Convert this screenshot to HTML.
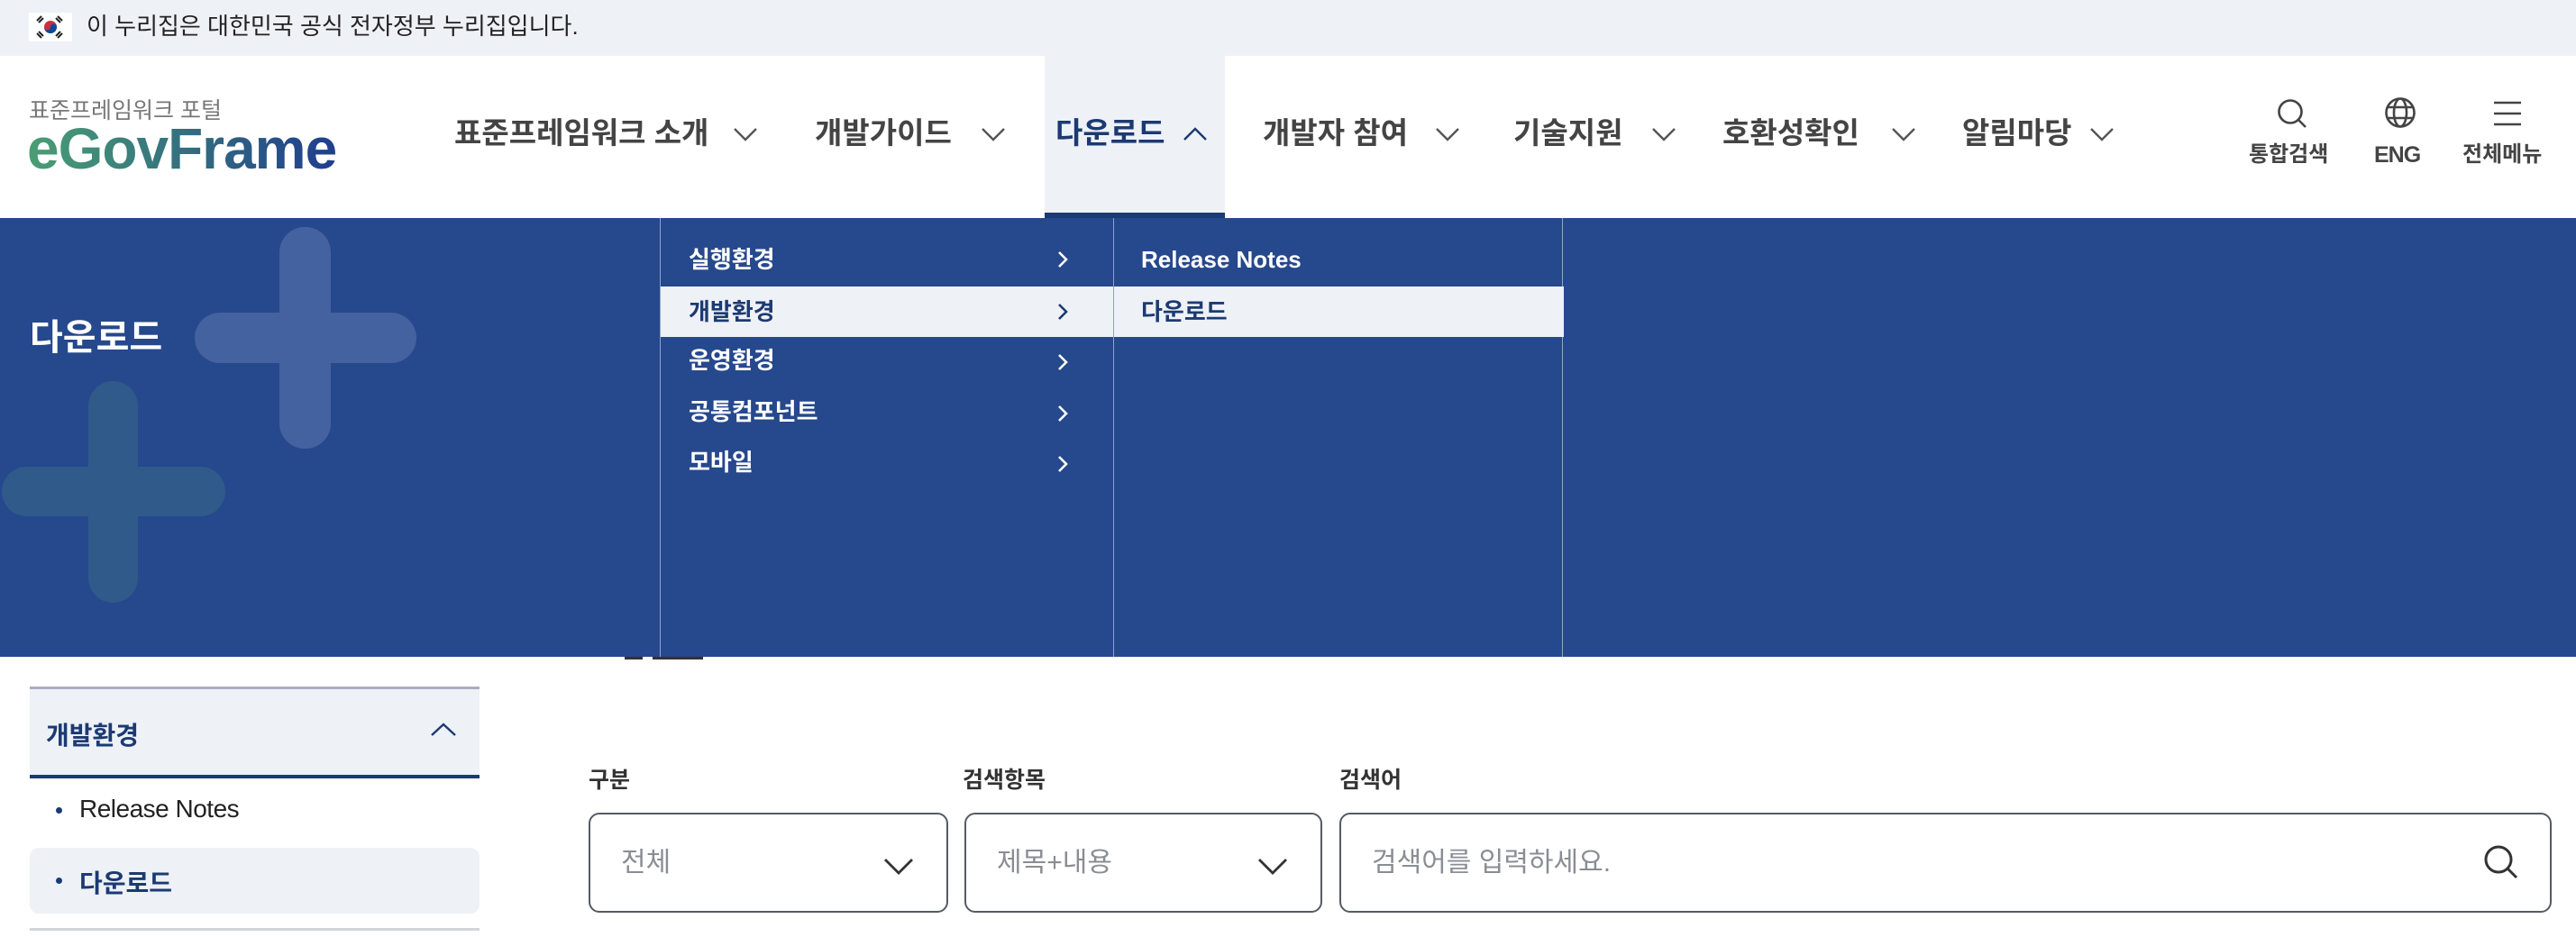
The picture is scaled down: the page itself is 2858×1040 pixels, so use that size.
<!DOCTYPE html>
<html><head><meta charset="utf-8"><style>
*{margin:0;padding:0;box-sizing:border-box}
body{width:2858px;height:1040px;overflow:hidden;background:#fff;font-family:"Liberation Sans","Noto Sans CJK KR",sans-serif;position:relative}
.a{position:absolute;white-space:nowrap}
.nav{font-size:33px;font-weight:bold;color:#444;top:128px;line-height:40px}
.dd{font-size:26px;font-weight:bold;color:#fff;line-height:30px}
.lbl{font-size:25px;font-weight:bold;color:#333;top:846px}
.box{position:absolute;top:902px;height:111px;border:2px solid #555a62;border-radius:12px;background:#fff}
.ph{position:absolute;left:34px;top:34px;font-size:30px;color:#8a8d93;line-height:40px}
.il{top:156px;font-size:24px;font-weight:bold;color:#444;line-height:32px}
</style></head><body>
<div class="a" style="left:0;top:0;width:2858px;height:62px;background:#eef1f6"></div>
<svg class="a" style="left:32px;top:14px" width="48" height="32" viewBox="0 0 48 32"><rect width="48" height="32" fill="#fff"/><circle cx="24" cy="16" r="7" fill="#c8313e"/><path d="M17 16a7 7 0 0 0 14 0a3.5 3.5 0 0 0-7 0a3.5 3.5 0 0 1-7 0z" fill="#0b4a9e"/><g stroke="#222" stroke-width="2"><path d="M9 9l5-5M11 11l5-5M32 4l5 5M30 6l5 5M9 23l5 5M11 21l5 5M32 28l5-5M30 26l5-5"/></g></svg>
<div class="a" style="left:96px;top:12px;font-size:26px;color:#222;line-height:34px">이 누리집은 대한민국 공식 전자정부 누리집입니다.</div>

<div class="a" style="left:32px;top:108px;font-size:25px;color:#777;line-height:30px">표준프레임워크 포털</div>
<div class="a" style="left:30px;top:128px;font-size:64px;font-weight:bold;line-height:74px;letter-spacing:-1px;background:linear-gradient(90deg,#4a9e74,#34707f 50%,#1f3d8e);-webkit-background-clip:text;background-clip:text;color:transparent">eGovFrame</div>

<div class="a" style="left:1159px;top:62px;width:200px;height:180px;background:#eef1f6"></div>
<div class="a" style="left:1159px;top:236px;width:200px;height:6px;background:#1c3a72"></div>

<div class="a nav" style="left:504px">표준프레임워크 소개</div>
<div class="a nav" style="left:904px">개발가이드</div>
<div class="a nav" style="left:1171px;color:#1c3a72">다운로드</div>
<div class="a nav" style="left:1401px">개발자 참여</div>
<div class="a nav" style="left:1679px">기술지원</div>
<div class="a nav" style="left:1911px">호환성확인</div>
<div class="a nav" style="left:2177px">알림마당</div>
<svg class="a" style="left:0;top:0" width="2858" height="242" fill="none" stroke-width="2.4">
<g stroke="#555"><path d="M815 143l12 12l12-12M1090 143l12 12l12-12M1594 143l12 12l12-12M1834 143l12 12l12-12M2100 143l12 12l12-12M2320 143l12 12l12-12"/></g>
<path d="M1314 155l12-12l12 12" stroke="#1c3a72"/>
<g stroke="#444" stroke-width="2.6"><circle cx="2541" cy="124" r="12.5"/><path d="M2550 133l8 8"/>
<circle cx="2663" cy="125" r="15.5"/><ellipse cx="2663" cy="125" rx="7" ry="15.5"/><path d="M2648 119h30M2648 131h30"/>
<path d="M2767 114h30M2767 126h30M2767 138h30"/></g></svg>
<div class="a il" style="left:2495px">통합검색</div>
<div class="a il" style="left:2634px;font-size:25px;letter-spacing:-1px">ENG</div>
<div class="a il" style="left:2732px">전체메뉴</div>

<div class="a" style="left:693px;top:720px;width:20px;height:12px;background:#333"></div>
<div class="a" style="left:724px;top:726px;width:56px;height:6px;background:#333"></div>

<div class="a" style="left:0;top:242px;width:2858px;height:487px;background:#26488c;overflow:hidden">
 <div class="a" style="left:310px;top:10px;width:57px;height:246px;border-radius:28px;background:#4461a0"></div>
 <div class="a" style="left:216px;top:105px;width:246px;height:56px;border-radius:28px;background:#4461a0"></div>
 <div class="a" style="left:98px;top:181px;width:55px;height:246px;border-radius:28px;background:#305a8a"></div>
 <div class="a" style="left:2px;top:276px;width:248px;height:55px;border-radius:28px;background:#305a8a"></div>
 <div class="a" style="left:33px;top:110px;font-size:40px;font-weight:bold;color:#fff;line-height:46px">다운로드</div>
 <div class="a" style="left:732px;top:0;width:1px;height:487px;background:#8fa3c8"></div>
 <div class="a" style="left:1235px;top:0;width:1px;height:487px;background:#8fa3c8"></div>
 <div class="a" style="left:1733px;top:0;width:1px;height:487px;background:#8fa3c8"></div>
 <div class="a" style="left:733px;top:76px;width:1002px;height:56px;background:#eef1f6"></div>
 <div class="a" style="left:1235px;top:76px;width:1px;height:56px;background:#8fa3c8"></div>
 <div class="a dd" style="left:764px;top:31px">실행환경</div>
 <div class="a dd" style="left:764px;top:89px;color:#1c3a72">개발환경</div>
 <div class="a dd" style="left:764px;top:143px">운영환경</div>
 <div class="a dd" style="left:764px;top:200px">공통컴포넌트</div>
 <div class="a dd" style="left:764px;top:256px">모바일</div>
 <div class="a dd" style="left:1266px;top:31px">Release Notes</div>
 <div class="a dd" style="left:1266px;top:89px;color:#1c3a72">다운로드</div>
 <svg class="a" style="left:1170px;top:0" width="20" height="300" fill="none" stroke-width="2.6"><g stroke="#fff"><path d="M5 38l8 8l-8 8M5 152l8 8l-8 8M5 209l8 8l-8 8M5 265l8 8l-8 8"/></g><path d="M5 96l8 8l-8 8" stroke="#1c3a72"/></svg>
</div>

<div class="a" style="left:33px;top:762px;width:499px;height:3px;background:#a9adc2"></div>
<div class="a" style="left:33px;top:765px;width:499px;height:95px;background:#eef1f6"></div>
<div class="a" style="left:33px;top:860px;width:499px;height:4px;background:#1c3a72"></div>
<div class="a" style="left:51px;top:795px;font-size:28px;font-weight:bold;color:#1c3a72">개발환경</div>
<svg class="a" style="left:476px;top:800px" width="34" height="20" fill="none"><path d="M3 16l13-12l13 12" stroke="#1c3a72" stroke-width="2.4"/></svg>
<div class="a" style="left:62px;top:896px;width:7px;height:7px;border-radius:50%;background:#1c3a72"></div>
<div class="a" style="left:88px;top:882px;font-size:28px;color:#222;letter-spacing:-0.5px">Release Notes</div>
<div class="a" style="left:33px;top:941px;width:499px;height:73px;border-radius:10px;background:#eef1f6"></div>
<div class="a" style="left:62px;top:974px;width:7px;height:7px;border-radius:50%;background:#1c3a72"></div>
<div class="a" style="left:88px;top:959px;font-size:28px;font-weight:bold;color:#1c3a72">다운로드</div>
<div class="a" style="left:33px;top:1030px;width:499px;height:3px;background:#d3d4d8"></div>

<div class="a lbl" style="left:653px">구분</div>
<div class="a lbl" style="left:1068px">검색항목</div>
<div class="a lbl" style="left:1486px">검색어</div>
<div class="box" style="left:653px;width:399px"><div class="ph">전체</div><svg class="a" style="left:324px;top:46px" width="36" height="24" fill="none"><path d="M3 4l15 15l15-15" stroke="#333" stroke-width="2.8"/></svg></div>
<div class="box" style="left:1070px;width:397px"><div class="ph">제목+내용</div><svg class="a" style="left:322px;top:46px" width="36" height="24" fill="none"><path d="M3 4l15 15l15-15" stroke="#333" stroke-width="2.8"/></svg></div>
<div class="box" style="left:1486px;width:1345px"><div class="ph">검색어를 입력하세요.</div><svg class="a" style="left:1266px;top:32px" width="44" height="44" fill="none" stroke="#333" stroke-width="3"><circle cx="18" cy="18" r="14"/><path d="M28 28l10 10"/></svg></div>
</body></html>
